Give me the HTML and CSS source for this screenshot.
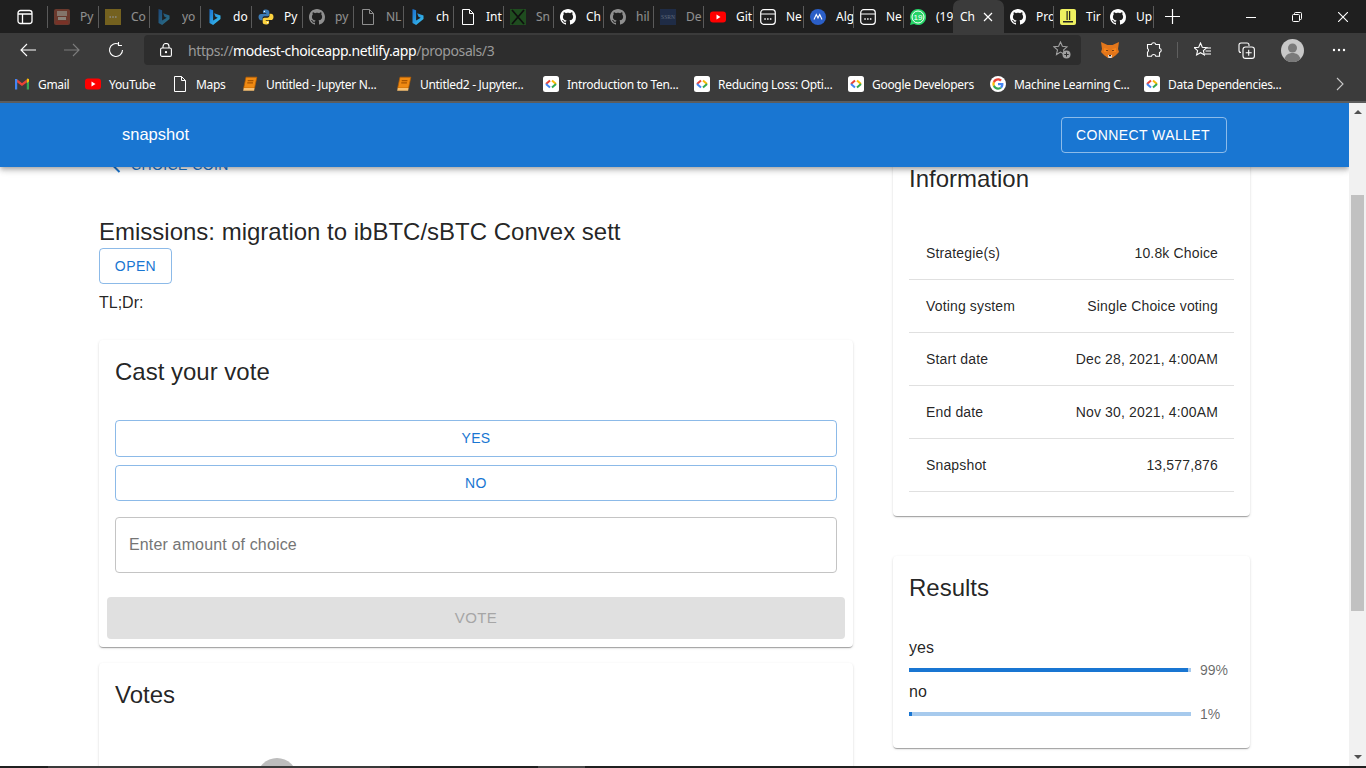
FILE: index.html
```html
<!DOCTYPE html>
<html lang="en">

<head>
    <meta charset="UTF-8">
    <title>Choice Coin</title>
    <link rel="stylesheet" href="styles.css">
</head>

<body>
    <svg class="sprites" width="0" height="0">
        <defs>
            <linearGradient id="bing-fill" x1="0" y1="0" x2="1" y2="1">
                <stop offset="0" stop-color="#1b6fd0" />
                <stop offset="1" stop-color="#39c6f0" />
            </linearGradient>
        </defs>
        <symbol id="i-github" viewBox="0 0 16 16">
            <path fill="#fff" d="M8 0C3.58 0 0 3.58 0 8c0 3.54 2.29 6.53 5.47 7.59.4.07.55-.17.55-.38 0-.19-.01-.82-.01-1.49-2.01.37-2.53-.49-2.69-.94-.09-.23-.48-.94-.82-1.13-.28-.15-.68-.52-.01-.53.63-.01 1.08.58 1.23.82.72 1.21 1.87.87 2.33.66.07-.52.28-.87.51-1.07-1.78-.2-3.64-.89-3.64-3.95 0-.87.31-1.59.82-2.15-.08-.2-.36-1.02.08-2.12 0 0 .67-.21 2.2.82.64-.18 1.32-.27 2-.27.68 0 1.36.09 2 .27 1.53-1.04 2.2-.82 2.2-.82.44 1.1.16 1.92.08 2.12.51.56.82 1.27.82 2.15 0 3.07-1.87 3.75-3.65 3.95.29.25.54.73.54 1.48 0 1.07-.01 1.93-.01 2.2 0 .21.15.46.55.38A8.013 8.013 0 0016 8c0-4.42-3.58-8-8-8z" />
        </symbol>
        <symbol id="i-bing" viewBox="0 0 16 16">
            <path fill="url(#bing-fill)" d="M2.5 0l3.6 1.3v10.2l4.6-2.7-2.2-1-1.4-3.5 6.4 2.2v3.6L6.1 15.9 2.5 13.9z" />
        </symbol>
        <symbol id="i-doc" viewBox="0 0 16 16">
            <path fill="none" stroke="#fff" stroke-linejoin="round" d="M2.5.5h7l4 4v11h-11zM9.5.5v4h4" />
        </symbol>
        <symbol id="i-python" viewBox="0 0 16 16">
            <path fill="#3b7bb5" d="M8 .5C5 .5 5 1.8 5 2.8v1.5h3.2v.6H3C1.6 4.9.5 6 .5 8s1.1 3.2 2.5 3.2h1.500V9.400c0-1.200 1-2.100 2.100-2.100h3c1 0 1.700-.8 1.700-1.700V2.800C11.300 1.500 10 .5 8 .5z" />
            <path fill="#fcd33f" d="M8 15.500c3 0 3-1.300 3-2.300v-1.500H7.800v-.6H13c1.400 0 2.500-1.100 2.500-3.100S14.400 4.800 13 4.800h-1.500v1.800c0 1.200-1 2.100-2.100 2.100h-3c-1 0-1.700.8-1.700 1.700v2.800C4.700 14.500 6 15.500 8 15.500z" />
            <circle cx="6.4" cy="2.4" r=".7" fill="#fff" />
            <circle cx="9.6" cy="13.6" r=".7" fill="#fff" />
        </symbol>
        <symbol id="i-youtube" viewBox="0 0 16 16">
            <rect y="2.5" width="16" height="11" rx="3" fill="#f00" />
            <path fill="#fff" d="M6.500 5.500l4 2.500-4 2.500z" />
        </symbol>
        <symbol id="i-window" viewBox="0 0 16 16">
            <rect x=".7" y=".7" width="14.6" height="14.6" rx="3" fill="none" stroke="#fff" stroke-width="1.2" />
            <path stroke="#fff" d="M1 5h14" />
            <path stroke="#fff" stroke-width="1.3" stroke-dasharray="1.5 1.3" d="M4.300 10h7.500" />
        </symbol>
        <symbol id="i-dev" viewBox="0 0 16 16">
            <rect width="16" height="16" rx="2.5" fill="#fff" />
            <path fill="none" stroke="#ea4335" stroke-width="2" d="M7 4.500L3 8" />
            <path fill="none" stroke="#4285f4" stroke-width="2" d="M3 8l4 3.500" />
            <path fill="none" stroke="#fbbc05" stroke-width="2" d="M9 4.500L13 8" />
            <path fill="none" stroke="#34a853" stroke-width="2" d="M13 8l-4 3.500" />
        </symbol>
        <symbol id="i-book" viewBox="0 0 14 14">
            <path fill="#f08a12" stroke="#b85f00" stroke-width=".6" d="M3.500 1H13l-2 9.500H1.500z" />
            <path fill="#f8c070" d="M1.500 10.500H11l-.4 2.500H1z" />
            <path stroke="#a85500" d="M5 4h5M4.600 6h5" />
        </symbol>
    </svg>

    <div class="tabbar">
        <div class="tab-action">
            <svg width="16" height="16" viewBox="0 0 16 16" fill="none" stroke="#fff" stroke-width="1.3">
                <rect x="1" y="1.5" width="14" height="13" rx="2.5" />
                <path d="M1 5h14M5.500 5v9.500" />
            </svg>
        </div>
        <div class="tab tab-wide dim"><svg class="tab-icon" viewBox="0 0 16 16"><rect width="16" height="16" rx="2" fill="#b5533c" /><rect x="3" y="2" width="10" height="5" fill="#e6c8b4" /><rect x="4" y="8" width="8" height="3" fill="#f2e4d4" /><rect x="2" y="12" width="12" height="3" fill="#d4452f" /></svg><span>Py</span></div>
        <div class="tab tab-wide dim"><svg class="tab-icon" viewBox="0 0 16 16"><rect width="16" height="16" fill="#c9a21f" /><path stroke="#fff" stroke-width="1.4" stroke-dasharray="1.4 1.4" d="M4.500 8H12" /></svg><span>Co</span></div>
        <div class="tab tab-wide dim"><svg class="tab-icon"><use href="#i-bing" /></svg><span>yo</span></div>
        <div class="tab tab-wide"><svg class="tab-icon"><use href="#i-bing" /></svg><span>do</span></div>
        <div class="tab tab-wide"><svg class="tab-icon"><use href="#i-python" /></svg><span>Py</span></div>
        <div class="tab tab-wide dim"><svg class="tab-icon"><use href="#i-github" /></svg><span>py</span></div>
        <div class="tab dim"><svg class="tab-icon"><use href="#i-doc" /></svg><span>NL</span></div>
        <div class="tab"><svg class="tab-icon"><use href="#i-bing" /></svg><span>ch</span></div>
        <div class="tab"><svg class="tab-icon"><use href="#i-doc" /></svg><span>Int</span></div>
        <div class="tab dim"><svg class="tab-icon" viewBox="0 0 16 16"><rect width="16" height="16" fill="#1f7a1f" /><path stroke="#000" stroke-width="1.8" d="M2 1l12 14M14 1L2 15" /></svg><span>Sn</span></div>
        <div class="tab"><svg class="tab-icon"><use href="#i-github" /></svg><span>Ch</span></div>
        <div class="tab dim"><svg class="tab-icon"><use href="#i-github" /></svg><span>hil</span></div>
        <div class="tab dim"><svg class="tab-icon" viewBox="0 0 16 16"><rect width="16" height="16" fill="#1f3a6e" /><text x="8" y="10" font-size="5.5" text-anchor="middle" fill="#9fb2d0" font-family="Liberation Serif">SSRN</text></svg><span>De</span></div>
        <div class="tab"><svg class="tab-icon"><use href="#i-youtube" /></svg><span>Git</span></div>
        <div class="tab"><svg class="tab-icon"><use href="#i-window" /></svg><span>Ne</span></div>
        <div class="tab"><svg class="tab-icon" viewBox="0 0 16 16"><circle cx="8" cy="8" r="8" fill="#2b5fc7" /><path fill="none" stroke="#fff" stroke-width="1.1" d="M4 10.500L6.300 5.500 8 9l1.700-3.500 2.300 5" /></svg><span>Alg</span></div>
        <div class="tab"><svg class="tab-icon"><use href="#i-window" /></svg><span>Ne</span></div>
        <div class="tab tab-noline"><svg class="tab-icon" viewBox="0 0 16 16"><path fill="#25d366" d="M8 0a8 8 0 00-6.900 12L0 16l4.100-1.100A8 8 0 108 0z" /><circle cx="8" cy="8" r="6" fill="none" stroke="#fff" stroke-width="1" /><text x="8" y="10.800" font-size="8" text-anchor="middle" fill="#fff" font-family="Liberation Sans">19</text></svg><span>(19</span></div>
        <div class="tab-active"><span>Ch</span>
            <svg class="tab-close" width="10" height="10" viewBox="0 0 10 10" stroke="#fff" stroke-width="1.2"><path d="M1 1l8 8M9 1l-8 8" /></svg>
        </div>
        <div class="tab"><svg class="tab-icon"><use href="#i-github" /></svg><span>Pro</span></div>
        <div class="tab"><svg class="tab-icon" viewBox="0 0 16 16"><rect width="16" height="16" rx="2" fill="#eef060" /><path fill="#222" d="M6.500 2h1.200v9H6.500zM9 2h1.200v9H9zM3 12h10v1.500H3z" /></svg><span>Tir</span></div>
        <div class="tab"><svg class="tab-icon"><use href="#i-github" /></svg><span>Up</span></div>
        <svg class="new-tab" width="15" height="15" viewBox="0 0 15 15" stroke="#fff" stroke-width="1.2"><path d="M7.500 0v15M0 7.500h15" /></svg>
        <div class="window-controls">
            <svg width="10" height="10" viewBox="0 0 10 10" stroke="#fff"><path d="M0 5.500h10" /></svg>
            <svg width="10" height="10" viewBox="0 0 10 10" fill="none" stroke="#fff"><rect x=".5" y="2.500" width="7" height="7" rx="1" /><path d="M2.500 2.500v-1a1 1 0 011-1h5a1 1 0 011 1v5a1 1 0 01-1 1h-1" /></svg>
            <svg width="10" height="10" viewBox="0 0 10 10" stroke="#fff" stroke-width="1.1"><path d="M0 0l10 10M10 0L0 10" /></svg>
        </div>
    </div>

    <div class="toolbar">
        <svg class="nav-back" width="16" height="14" viewBox="0 0 16 14" fill="none" stroke="#fff" stroke-width="1.1"><path d="M16 7H1M7 1L1 7l6 6" /></svg>
        <svg class="nav-forward" width="16" height="14" viewBox="0 0 16 14" fill="none" stroke="#7d7d7d" stroke-width="1.1"><path d="M0 7h15M9 1l6 6-6 6" /></svg>
        <svg class="nav-reload" width="16" height="16" viewBox="0 0 16 16" fill="none" stroke="#fff" stroke-width="1.1"><path d="M14.500 8A6.500 6.500 0 1110.500 2M10.500 0v3.500H14" /></svg>
        <div class="address">
            <svg class="lock" width="12" height="14" viewBox="0 0 12 14" fill="none" stroke="#fff" stroke-width="1.1"><rect x=".6" y="5" width="10.8" height="8.4" rx="1.5" /><path d="M3 5V3.500a3 3 0 016 0V5" /><circle cx="6" cy="9.2" r=".6" fill="#fff" /></svg>
            <span class="url"><span class="url-dim">https://</span>modest-choiceapp.netlify.app<span class="url-dim">/proposals/3</span></span>
            <svg class="star-add" width="18" height="18" viewBox="0 0 18 18"><path fill="none" stroke="#a0a0a0" stroke-width="1.1" d="M7.500 1l1.900 4.300 4.600.5-3.400 3.100 1 4.600-4.100-2.400-4 2.400 1-4.600L1 5.800l4.600-.5z" /><circle cx="13.500" cy="13.500" r="4" fill="#a0a0a0" /><path stroke="#2d2d2d" d="M13.500 11.300v4.400M11.300 13.500h4.400" /></svg>
        </div>
        <svg class="fox" width="18" height="17" viewBox="0 0 18 17"><path fill="#e2761b" d="M0 0l6.500 3h5L18 0l-1 7 1 3-3.500 3.500L11 16H7l-3.500-2.500L0 10l1-3z" /><path fill="#f6851b" d="M3 6l4 1-1 3H3zM15 6l-4 1 1 3h3z" /><path fill="#763d16" d="M5 8h2v1H5zM11 8h2v1h-2z" /><path fill="#e4e4e4" d="M7 13h4l-.5 3h-3z" /><path fill="#222" d="M8 13h2v1.200H8z" /></svg>
        <svg class="tool-puzzle" width="16" height="16" viewBox="0 0 16 16" fill="none" stroke="#fff" stroke-width="1.1"><path d="M5.500 2.500a2.200 2.200 0 014.300 0h3.700v3.700a2.200 2.200 0 010 4.300v3.700H9.800a2.200 2.200 0 00-4.300 0H1.500v-4a2.200 2.200 0 000-3.700V2.500z" /></svg>
        <span class="tool-sep"></span>
        <svg class="tool-fav" width="17" height="16" viewBox="0 0 17 16" fill="none" stroke="#fff" stroke-width="1.1"><path d="M6.500 1l1.800 4.200 4.500.4-3.400 3 1 4.400-3.900-2.300-3.900 2.300 1-4.400-3.400-3 4.500-.4zM12 6h5M11.500 9h5.500M11 12h6" /></svg>
        <svg class="tool-coll" width="17" height="17" viewBox="0 0 17 17" fill="none" stroke="#fff" stroke-width="1.1"><path d="M3 10.500A2 2 0 011 8.500V3a2 2 0 012-2h6a2 2 0 012 2v1" /><rect x="5" y="5" width="11.4" height="11.4" rx="2.5" /><path d="M10.700 7.700v6M7.700 10.700h6" /></svg>
        <svg class="avatar-icon" width="23" height="23" viewBox="0 0 23 23"><circle cx="11.500" cy="11.500" r="11.500" fill="#c8c8c8" /><circle cx="11.500" cy="9" r="4.500" fill="#7a7a7a" /><path fill="#7a7a7a" d="M3.500 20c1-4 4-6 8-6s7 2 8 6a11.500 11.500 0 01-16 0z" /></svg>
        <svg class="tool-more" width="14" height="4" viewBox="0 0 14 4" fill="#fff"><circle cx="2" cy="2" r="1.2" /><circle cx="7" cy="2" r="1.2" /><circle cx="12" cy="2" r="1.2" /></svg>
    </div>

    <div class="bookmarks">
        <div class="bm"><svg class="bm-icon" viewBox="0 0 16 16"><path fill="none" stroke="#ea4335" stroke-width="2.4" d="M2 4l6 4.600L14 4" /><path fill="#4285f4" d="M1 3h2.200v10.500H1z" /><path fill="#34a853" d="M12.800 3H15v10.500h-2.200z" /><path fill="#fbbc05" d="M13 2.500l2 .5v2.500l-2 1.500z" /></svg><span>Gmail</span></div>
        <div class="bm"><svg class="bm-icon"><use href="#i-youtube" /></svg><span>YouTube</span></div>
        <div class="bm"><svg class="bm-icon"><use href="#i-doc" /></svg><span>Maps</span></div>
        <div class="bm"><svg class="bm-icon"><use href="#i-book" /></svg><span>Untitled - Jupyter N...</span></div>
        <div class="bm"><svg class="bm-icon"><use href="#i-book" /></svg><span>Untitled2 - Jupyter...</span></div>
        <div class="bm"><svg class="bm-icon"><use href="#i-dev" /></svg><span>Introduction to Ten...</span></div>
        <div class="bm"><svg class="bm-icon"><use href="#i-dev" /></svg><span>Reducing Loss: Opti...</span></div>
        <div class="bm"><svg class="bm-icon"><use href="#i-dev" /></svg><span>Google Developers</span></div>
        <div class="bm"><svg class="bm-icon" viewBox="0 0 48 48"><circle cx="24" cy="24" r="24" fill="#fff" /><g transform="translate(7 7) scale(.71)"><path fill="#EA4335" d="M24 9.500c3.540 0 6.710 1.220 9.210 3.600l6.850-6.850C35.900 2.380 30.470 0 24 0 14.620 0 6.510 5.380 2.560 13.220l7.980 6.190C12.430 13.720 17.740 9.500 24 9.500z" /><path fill="#4285F4" d="M46.980 24.550c0-1.570-.15-3.090-.38-4.550H24v9.020h12.940c-.58 2.960-2.260 5.480-4.780 7.180l7.730 6c4.510-4.180 7.090-10.360 7.090-17.650z" /><path fill="#FBBC05" d="M10.530 28.590c-.48-1.450-.76-2.990-.76-4.590s.27-3.140.76-4.590l-7.980-6.190C.92 16.460 0 20.120 0 24c0 3.880.92 7.540 2.560 10.780l7.970-6.190z" /><path fill="#34A853" d="M24 48c6.480 0 11.930-2.130 15.890-5.810l-7.730-6c-2.150 1.450-4.920 2.300-8.160 2.300-6.260 0-11.570-4.220-13.470-9.910l-7.980 6.190C6.510 42.620 14.620 48 24 48z" /></g></svg><span>Machine Learning C...</span></div>
        <div class="bm"><svg class="bm-icon"><use href="#i-dev" /></svg><span>Data Dependencies...</span></div>
        <svg class="bm-more" width="8" height="14" viewBox="0 0 8 14" fill="none" stroke="#c8c8c8" stroke-width="1.1"><path d="M1 1l6 6-6 6" /></svg>
    </div>

    <div class="viewport">
        <div class="page">
            <header class="appbar">
                <span class="logo">snapshot</span>
                <button class="connect-btn">CONNECT WALLET</button>
            </header>

            <main class="content">
                <section class="col-left">
                    <a class="back-link">
                        <svg width="10" height="16" viewBox="0 0 10 16" fill="none" stroke="#1976d2" stroke-width="2"><path d="M8.500 1L1.500 8l7 7" /></svg>
                        CHOICE COIN
                    </a>
                    <h1 class="title">Emissions: migration to ibBTC/sBTC Convex sett</h1>
                    <button class="status-btn">OPEN</button>
                    <p class="tldr">TL;Dr:</p>

                    <div class="card vote-card">
                        <h2>Cast your vote</h2>
                        <button class="choice-btn choice-first">YES</button>
                        <button class="choice-btn">NO</button>
                        <input class="amount" type="text" placeholder="Enter amount of choice">
                        <button class="vote-btn" disabled>VOTE</button>
                    </div>

                    <div class="card votes-card">
                        <h2>Votes</h2>
                        <div class="voter-avatar"></div>
                    </div>
                </section>

                <aside class="col-right">
                    <div class="card info-card">
                        <h2>Information</h2>
                        <div class="info-row"><span>Strategie(s)</span><span>10.8k Choice</span></div>
                        <div class="info-row"><span>Voting system</span><span>Single Choice voting</span></div>
                        <div class="info-row"><span>Start date</span><span>Dec 28, 2021, 4:00AM</span></div>
                        <div class="info-row"><span>End date</span><span>Nov 30, 2021, 4:00AM</span></div>
                        <div class="info-row"><span>Snapshot</span><span>13,577,876</span></div>
                    </div>

                    <div class="card results-card">
                        <h2>Results</h2>
                        <p class="result-name result-first">yes</p>
                        <div class="result-row">
                            <div class="bar"><div class="bar-fill" style="width: 99%"></div></div>
                            <span class="pct">99%</span>
                        </div>
                        <p class="result-name">no</p>
                        <div class="result-row">
                            <div class="bar"><div class="bar-fill" style="width: 1%"></div></div>
                            <span class="pct">1%</span>
                        </div>
                    </div>
                </aside>
            </main>
        </div>

        <div class="scrollbar">
            <span class="arrow-up"></span>
            <div class="scroll-thumb"></div>
            <span class="arrow-down"></span>
        </div>
    </div>

    <div class="taskbar">
        <span class="task-a"></span>
        <span class="task-b"></span>
    </div>
</body>

</html>
```

FILE: styles.css
```css
/* General Reset */
* {
    margin: 0;
    padding: 0;
    box-sizing: border-box;
}

html,
body {
    height: 100%;
    overflow: hidden;
}

body {
    display: flex;
    flex-direction: column;
    font-family: 'Liberation Sans', Arial, sans-serif;
    color: rgba(0, 0, 0, 0.87);
    background-color: #fff;
}

.sprites {
    display: block;
    height: 0;
}

button {
    font-family: inherit;
}

/* Browser tabs */
.tabbar {
    display: flex;
    align-items: center;
    flex: 0 0 33px;
    background-color: #1f1f1f;
    font-family: 'Noto Sans', sans-serif;
    font-size: 12px;
    color: #fff;
}

.tab-action {
    display: flex;
    align-items: center;
    width: 48px;
    height: 22px;
    padding-left: 17px;
    border-right: 1px solid #5a5a5a;
}

.tab {
    display: flex;
    align-items: center;
    flex: 0 0 50px;
    height: 22px;
    padding-left: 6px;
    overflow: hidden;
    border-right: 1px solid #5a5a5a;
    white-space: nowrap;
}

.tab-wide {
    flex-basis: 51px;
}

.tab-noline {
    flex-basis: 49px;
    border-right: none;
}

.tab-icon {
    flex: 0 0 16px;
    width: 16px;
    height: 16px;
    margin-right: 10px;
}

.dim span,
.dim .tab-icon {
    opacity: 0.5;
}

.tab-active {
    display: flex;
    align-items: center;
    flex: 0 0 51px;
    align-self: stretch;
    padding-left: 7px;
    background-color: #3b3b3b;
    border-radius: 7px 7px 0 0;
}

.tab-close {
    margin-left: 8px;
}

.new-tab {
    margin-left: 11px;
}

.window-controls {
    display: flex;
    gap: 36px;
    margin-left: auto;
    padding-right: 18px;
}

/* Browser toolbar */
.toolbar {
    display: flex;
    align-items: center;
    flex: 0 0 34px;
    background-color: #3b3b3b;
}

.nav-back {
    margin-left: 20px;
}

.nav-forward,
.nav-reload {
    margin-left: 28px;
}

.address {
    display: flex;
    align-items: center;
    width: 937px;
    height: 30px;
    margin-left: 20px;
    padding-left: 16px;
    background-color: #2d2d2d;
    border-radius: 4px;
}

.url {
    margin-left: 16px;
    font-family: 'Noto Sans', sans-serif;
    font-size: 14px;
    letter-spacing: -0.4px;
    color: #fff;
    white-space: nowrap;
}

.url-dim {
    color: #9a9a9a;
}

.star-add {
    margin-left: auto;
    margin-right: 10px;
}

.fox {
    margin-left: 20px;
}

.tool-puzzle {
    margin-left: 27px;
}

.tool-sep {
    width: 1px;
    height: 16px;
    margin-left: 15px;
    background-color: #5f5f5f;
}

.tool-fav {
    margin-left: 16px;
}

.tool-coll {
    margin-left: 27px;
}

.avatar-icon {
    margin-left: 26px;
}

.tool-more {
    margin-left: 28px;
}

/* Bookmarks */
.bookmarks {
    display: grid;
    grid-template-columns: 71px 87px 70px 154px 147px 151px 154px 142px 154px 1fr auto;
    align-items: center;
    flex: 0 0 36px;
    padding-left: 14px;
    background-color: #3b3b3b;
    border-bottom: 2px solid #5c5c5c;
    font-family: 'Noto Sans', sans-serif;
    font-size: 12px;
    letter-spacing: -0.3px;
    color: #fff;
}

.bm {
    display: flex;
    align-items: center;
    gap: 8px;
    white-space: nowrap;
}

.bm-icon {
    width: 16px;
    height: 16px;
}

.bm-more {
    margin-right: 22px;
}

/* Page */
.viewport {
    display: flex;
    flex: 1;
    min-height: 0;
}

.page {
    position: relative;
    flex: 1;
    overflow: hidden;
}

.appbar {
    position: absolute;
    top: 0;
    left: 0;
    right: 0;
    z-index: 10;
    display: flex;
    align-items: center;
    justify-content: space-between;
    height: 64px;
    padding: 0 122px;
    background-color: #1976d2;
    color: #fff;
    box-shadow: 0 2px 4px -1px rgba(0, 0, 0, 0.2), 0 4px 5px 0 rgba(0, 0, 0, 0.14), 0 1px 10px 0 rgba(0, 0, 0, 0.12);
}

.logo {
    padding-bottom: 2px;
    font-size: 16.5px;
}

.connect-btn {
    width: 166px;
    height: 36px;
    padding-right: 2px;
    background: transparent;
    border: 1px solid rgba(255, 255, 255, 0.5);
    border-radius: 4px;
    color: #fff;
    font-size: 14px;
    letter-spacing: 0.4px;
}

.content {
    display: flex;
    gap: 40px;
    padding-left: 99px;
}

.col-left {
    flex: 0 0 754px;
    min-width: 0;
    padding-top: 50px;
}

.col-right {
    flex: 0 0 357px;
    min-width: 0;
    padding-top: 44px;
}

.back-link {
    display: flex;
    align-items: center;
    gap: 10px;
    height: 24px;
    padding-left: 12px;
    color: #1976d2;
    font-size: 14px;
    letter-spacing: 0.4px;
}

.title {
    margin-top: 39px;
    font-size: 24px;
    font-weight: 400;
    line-height: 32px;
}

.status-btn {
    display: block;
    width: 73px;
    height: 36px;
    background: transparent;
    border: 1px solid rgba(25, 118, 210, 0.5);
    border-radius: 4px;
    color: #1976d2;
    font-size: 14px;
    letter-spacing: 0.4px;
}

.tldr {
    margin-top: 7px;
    font-size: 16px;
    line-height: 24px;
}

.card {
    padding: 16px;
    background-color: #fff;
    border-radius: 4px;
    box-shadow: 0 2px 1px -1px rgba(0, 0, 0, 0.2), 0 1px 1px 0 rgba(0, 0, 0, 0.14), 0 1px 3px 0 rgba(0, 0, 0, 0.12);
}

.card h2 {
    font-size: 24px;
    font-weight: 400;
    line-height: 32px;
}

.vote-card {
    margin-top: 25px;
    padding-bottom: 8px;
}

.choice-btn {
    display: block;
    width: 100%;
    height: 36.5px;
    margin-top: 8px;
    background: transparent;
    border: 1px solid rgba(25, 118, 210, 0.5);
    border-radius: 4px;
    color: #1976d2;
    font-size: 14px;
    letter-spacing: 0.4px;
}

.choice-first {
    margin-top: 32px;
}

.amount {
    display: block;
    width: 100%;
    height: 56px;
    margin-top: 16px;
    padding: 0 13px;
    border: 1px solid #c4c4c4;
    border-radius: 4px;
    font-family: inherit;
    font-size: 16px;
    letter-spacing: 0.15px;
    outline: none;
}

.amount::placeholder {
    color: #757575;
    opacity: 1;
}

.vote-btn {
    display: block;
    width: 738px;
    height: 42px;
    margin: 24px 0 0 -8px;
    padding-bottom: 2px;
    background-color: #e0e0e0;
    border: none;
    border-radius: 4px;
    color: #a6a6a6;
    font-size: 15px;
    letter-spacing: 0.4px;
}

.votes-card {
    height: 200px;
    margin-top: 16px;
}

.voter-avatar {
    width: 40px;
    height: 40px;
    margin: 47px 0 0 142px;
    background-color: #bdbdbd;
    border-radius: 50%;
}

.info-card {
    padding-bottom: 24px;
}

.info-card h2 {
    margin-bottom: 32px;
}

.info-row {
    display: flex;
    align-items: center;
    justify-content: space-between;
    height: 53px;
    padding: 0 16px 0 17px;
    border-bottom: 1px solid #e0e0e0;
    font-size: 14px;
    letter-spacing: 0.15px;
}

.results-card {
    margin-top: 40px;
    padding-bottom: 24px;
}

.result-name {
    font-size: 16px;
    line-height: 24px;
}

.result-first {
    margin-top: 32px;
}

.result-row {
    display: flex;
    align-items: center;
    gap: 9px;
    height: 20px;
}

.bar {
    flex: 0 0 282px;
    height: 4px;
    background-color: #a7caed;
}

.bar-fill {
    height: 100%;
    background-color: #1976d2;
}

.pct {
    font-size: 14px;
    color: rgba(0, 0, 0, 0.6);
}

/* Scrollbar */
.scrollbar {
    display: flex;
    flex-direction: column;
    align-items: center;
    flex: 0 0 17px;
    background-color: #f1f1f1;
}

.arrow-up {
    margin-top: 7px;
    border: 4px solid transparent;
    border-top: none;
    border-bottom: 4px solid #505050;
}

.scroll-thumb {
    width: 13px;
    height: 416px;
    margin-top: 81px;
    background-color: #c1c1c1;
}

.arrow-down {
    margin-top: auto;
    margin-bottom: 7px;
    border: 4px solid transparent;
    border-bottom: none;
    border-top: 4px solid #505050;
}

.taskbar {
    display: flex;
    flex: 0 0 2px;
    background-color: #202020;
}

.task-a {
    width: 342px;
    margin-left: 48px;
    background-color: #3a3a3a;
}

.task-b {
    width: 47px;
    margin-left: 148px;
    background-color: #4a4a4a;
}
```
